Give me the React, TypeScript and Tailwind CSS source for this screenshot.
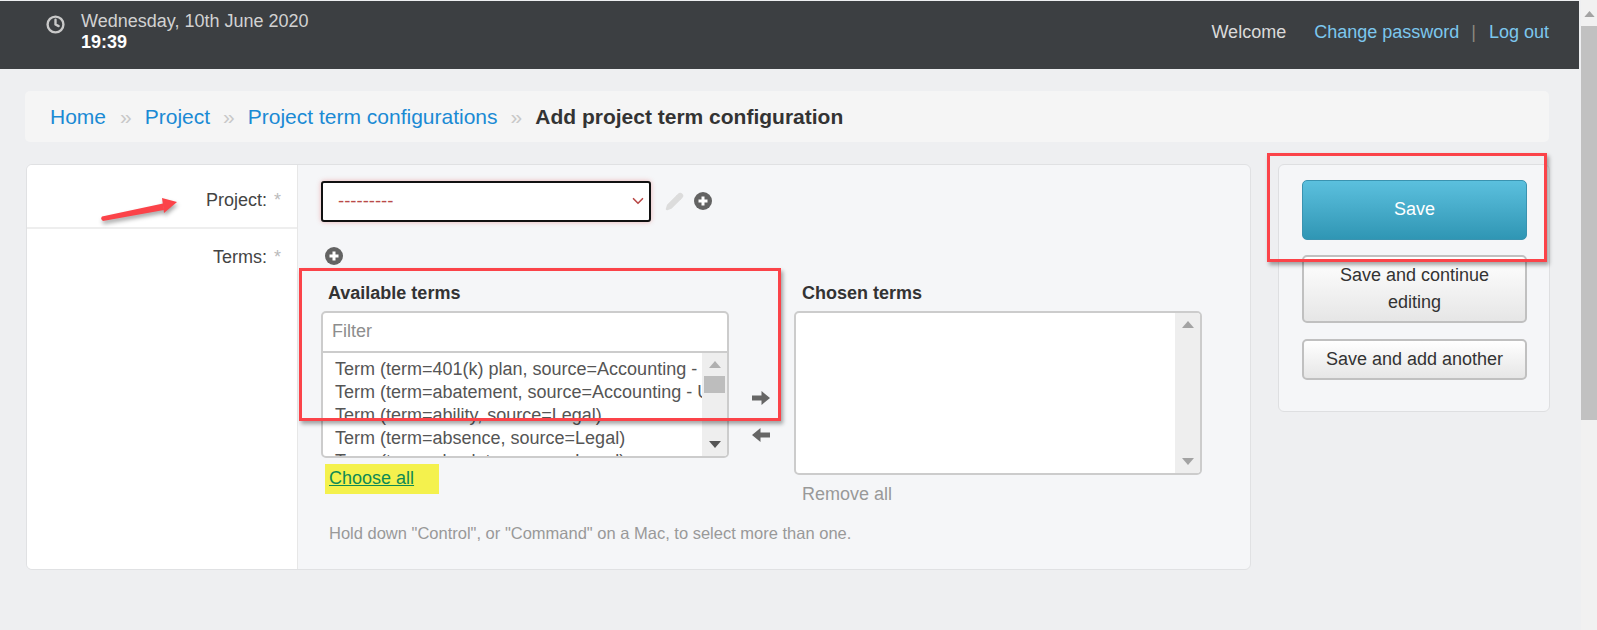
import { Clock, Pencil, ChevronDown } from 'lucide-react';

function PlusCircle({ className = '' }: { className?: string }) {
  return (
    <svg viewBox="0 0 18 18" className={`w-[18px] h-[18px] ${className}`}>
      <circle cx="9" cy="9" r="9" fill="#636363" />
      <path d="M9 4.5v9M4.5 9h9" stroke="#fff" strokeWidth="3" />
    </svg>
  );
}

function SolidArrow({ left, className = '' }: { left?: boolean; className?: string }) {
  return (
    <svg viewBox="0 0 18 14" className={`w-[18px] h-[14px] ${left ? '-scale-x-100' : ''} ${className}`}>
      <path d="M0 4.5h9.5V0L18 7l-8.5 7V9.5H0z" fill="#666" />
    </svg>
  );
}

function ScrollTrack({ dark, thumb }: { dark?: boolean; thumb?: boolean }) {
  const arrow = dark ? 'text-[#555]' : 'text-[#a3a3a3]';
  return (
    <div className="w-[25px] bg-[#eeeeee] flex flex-col items-center justify-between py-2 relative shrink-0">
      <svg viewBox="0 0 12 7" className={`w-[12px] h-[7px] ${dark ? 'text-[#b0b0b0]' : arrow}`}>
        <path d="M6 0l6 7H0z" fill="currentColor" />
      </svg>
      {thumb && <div className="absolute left-[2px] top-[23px] w-[21px] h-[17px] bg-[#bdbdbd]" />}
      <svg viewBox="0 0 12 7" className={`w-[12px] h-[7px] ${arrow}`}>
        <path d="M0 0h12L6 7z" fill="currentColor" />
      </svg>
    </div>
  );
}

const terms = [
  'Term (term=401(k) plan, source=Accounting - US)',
  'Term (term=abatement, source=Accounting - US)',
  'Term (term=ability, source=Legal)',
  'Term (term=absence, source=Legal)',
  'Term (term=absolute, source=Legal)',
];

export default function App() {
  return (
    <div className="relative w-[1597px] h-[630px] overflow-hidden bg-[#eeeff1] text-[#333] font-['Liberation_Sans',Arial,sans-serif]">
      {/* Page scrollbar */}
      <div className="absolute right-0 top-0 bottom-0 w-[16px] bg-[#f1f1f1] flex flex-col items-center pt-[11px]">
        <svg viewBox="0 0 12 7" className="w-[11px] h-[6px] text-[#a3a3a3]">
          <path d="M6 0l6 7H0z" fill="currentColor" />
        </svg>
        <div className="w-[16px] h-[394px] mt-[9px] bg-[#c1c1c1]" />
      </div>

      {/* Header */}
      <div className="mt-px w-[1579px] h-[68px] bg-[#3c3f42] flex justify-between pl-[46px] pr-[30px] text-[18px]">
        <div className="flex items-start pt-[10px]">
          <Clock size={19} strokeWidth={3} className="text-[#c9c9c9] mt-[4px]" />
          <div className="ml-[16px] leading-[21px]">
            <div className="text-[#d2d2d2]">Wednesday, 10th June 2020</div>
            <div className="font-bold text-white">19:39</div>
          </div>
        </div>
        <div className="flex items-start pt-[21px] leading-[21px]">
          <span className="text-[#dadada]">Welcome</span>
          <a className="text-[#7cc7ee] ml-[28px]">Change password</a>
          <span className="text-[#8a8a7e] ml-[12px] mr-[13px]">|</span>
          <a className="text-[#7cc7ee]">Log out</a>
        </div>
      </div>

      {/* Breadcrumb */}
      <div className="ml-[25px] mt-[22px] w-[1524px] h-[51px] rounded-[5px] bg-[#f5f5f5] flex items-center pl-[25px] text-[21px]">
        <a className="text-[#1a8ad4]">Home</a>
        <span className="text-[#c8c8c8] ml-[14px] mr-[13px]">»</span>
        <a className="text-[#1a8ad4]">Project</a>
        <span className="text-[#c8c8c8] mx-[13px]">»</span>
        <a className="text-[#1a8ad4]">Project term configurations</a>
        <span className="text-[#c8c8c8] mx-[13px]">»</span>
        <span className="font-bold text-[#333]">Add project term configuration</span>
      </div>

      <div className="flex items-start ml-[26px] mt-[22px]">
        {/* Form card */}
        <div className="w-[1225px] h-[406px] rounded-[6px] border border-[#e0e1e3] bg-[#f5f6f8] flex overflow-hidden">
          <div className="w-[271px] bg-white border-r border-[#e7e7e7] text-[18px] text-[#444] shrink-0">
            <div className="h-[64px] border-b-2 border-[#eeeeee] flex justify-end pr-[16px] pt-[25px] leading-[20px]">
              <span>Project:</span>
              <span className="text-[#bbb] ml-[7px]">*</span>
            </div>
            <div className="flex justify-end pr-[16px] pt-[18px] leading-[20px]">
              <span>Terms:</span>
              <span className="text-[#bbb] ml-[7px]">*</span>
            </div>
          </div>

          <div className="flex-1 pl-[23px] pt-[15px]">
            <div className="flex items-center h-[42px]">
              <div className="w-[330px] h-[41px] rounded-[3px] border-2 border-[#111] bg-white shadow-[0_0_5px_rgba(220,60,60,0.35)] flex items-center justify-between pl-[15px] pr-[2px] text-[#b94a48] text-[18.5px]">
                <span>---------</span>
                <ChevronDown size={18} strokeWidth={2.2} className="shrink-0" />
              </div>
              <Pencil size={19} className="ml-[14px] text-[#dcdcdc] fill-[#dcdcdc]" />
              <PlusCircle className="ml-[10px]" />
            </div>

            <PlusCircle className="ml-[4px] mt-[25px]" />

            <div className="flex mt-[18px]">
              <div className="w-[408px]">
                <div className="pl-[7px] h-[28px] font-bold text-[18px] leading-[20px] text-[#333]">Available terms</div>
                <div className="h-[147px] rounded-[5px] border-2 border-[#cccccc] bg-white overflow-hidden flex flex-col">
                  <div className="h-[40px] pb-[2px] border-b-2 border-[#cccccc] flex items-center pl-[9px] text-[18px] text-[#8d8d8d] shrink-0">
                    Filter
                  </div>
                  <div className="flex flex-1 min-h-0">
                    <div className="flex-1 overflow-hidden pl-[12px] pt-[5px] text-[18px] leading-[23px] text-[#555] whitespace-nowrap">
                      {terms.map((t) => (
                        <div key={t}>{t}</div>
                      ))}
                    </div>
                    <ScrollTrack dark thumb />
                  </div>
                </div>
                <a className="block mt-[6px] ml-[4px] w-[114px] h-[30px] pl-[4px] pt-[4px] underline text-[18px] leading-[20px] text-[#0e8a54] bg-[#f4f14d]">
                  Choose all
                </a>
              </div>

              <div className="w-[65px] pr-[2px] flex flex-col items-center pt-[108px]">
                <SolidArrow />
                <SolidArrow left className="mt-[23px]" />
              </div>

              <div className="w-[408px]">
                <div className="pl-[8px] h-[28px] font-bold text-[18px] leading-[20px] text-[#333]">Chosen terms</div>
                <div className="h-[164px] rounded-[5px] border-2 border-[#cccccc] bg-white overflow-hidden flex justify-end">
                  <ScrollTrack />
                </div>
                <div className="pl-[8px] mt-[9px] text-[18px] leading-[20px] text-[#999]">Remove all</div>
              </div>
            </div>

            <div className="pl-[8px] mt-[19px] text-[16.5px] leading-[20px] text-[#999]">
              Hold down "Control", or "Command" on a Mac, to select more than one.
            </div>
          </div>
        </div>

        {/* Submit panel */}
        <div className="ml-[27px] w-[272px] h-[248px] rounded-[6px] border border-[#dedfe1] bg-[#f5f6f8] pt-[15px] pl-[23px] pr-[22px] flex flex-col text-[18px]">
          <button className="h-[60px] pb-[2px] rounded-[5px] border border-[#3a93b0] bg-gradient-to-b from-[#5bc0de] to-[#2f96b4] text-white">
            Save
          </button>
          <button className="mt-[15px] h-[68px] px-[16px] rounded-[5px] border-2 border-[#c0c0c0] bg-gradient-to-b from-white to-[#e6e6e6] text-[#333] leading-[27px]">
            Save and continue editing
          </button>
          <button className="mt-[16px] h-[41px] rounded-[5px] border-2 border-[#c0c0c0] bg-gradient-to-b from-white to-[#e6e6e6] text-[#333]">
            Save and add another
          </button>
        </div>
      </div>

      {/* Annotations drawn over the screenshot */}
      <div className="absolute left-[299px] top-[268px] w-[482px] h-[153px] border-[3px] border-[#fb4349] shadow-[2px_3px_4px_rgba(0,0,0,0.35)]" />
      <div className="absolute left-[1267px] top-[153px] w-[280px] h-[109px] border-[3px] border-[#fb4349] shadow-[2px_3px_4px_rgba(0,0,0,0.35)]" />
      <svg className="absolute left-[90px] top-[190px] w-[90px] h-[40px] drop-shadow-[1px_3px_2px_rgba(0,0,0,0.35)]" viewBox="0 0 90 40">
        <path d="M12 26.5L73 13.5L74 20L13 31Q10 29 12 26.5Z" fill="#fb4349" />
        <path d="M72 8L87 12L74 23Z" fill="#fb4349" />
      </svg>
    </div>
  );
}
